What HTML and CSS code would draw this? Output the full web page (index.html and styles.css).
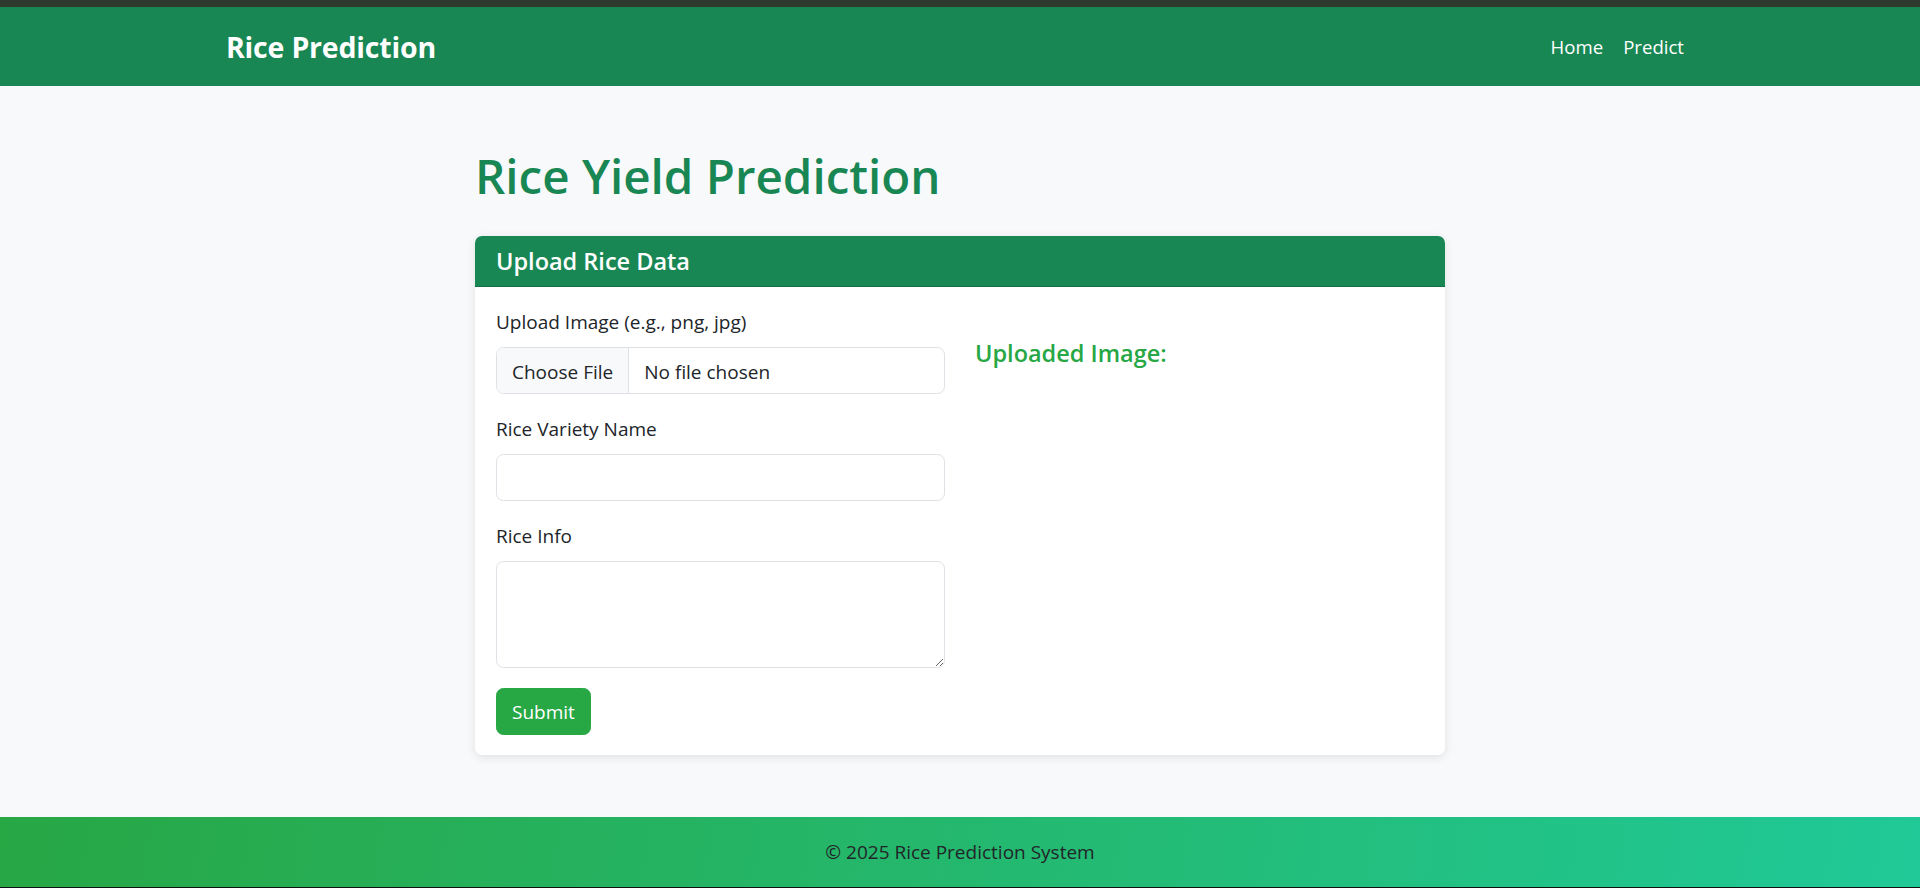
FILE: index.html
```html
<!DOCTYPE html>
<html lang="en">
<head>
<meta charset="utf-8">
<title>Rice Yield Prediction</title>
<link rel="stylesheet" href="styles.css">
</head>
<body>
<div class="topbar"></div>
<nav class="navbar">
  <div class="nav-inner">
    <a class="brand" href="#">Rice Prediction</a>
    <ul class="nav-links">
      <li><a class="nav-link" href="#">Home</a></li>
      <li><a class="nav-link" href="#">Predict</a></li>
    </ul>
  </div>
</nav>
<main class="main">
  <h1 class="page-title">Rice Yield Prediction</h1>
  <div class="card">
    <div class="card-header">
      <h5 class="card-title">Upload Rice Data</h5>
    </div>
    <div class="card-body">
      <div class="row">
        <form class="col">
          <div class="form-group">
            <label class="form-label" for="image">Upload Image (e.g., png, jpg)</label>
            <input class="form-control" type="file" id="image">
          </div>
          <div class="form-group">
            <label class="form-label" for="variety">Rice Variety Name</label>
            <input class="form-control" type="text" id="variety">
          </div>
          <div class="form-group">
            <label class="form-label" for="info">Rice Info</label>
            <textarea class="form-control textarea" id="info" rows="3"></textarea>
          </div>
          <button class="btn-submit" type="submit">Submit</button>
        </form>
        <div class="col">
          <h5 class="uploaded-title">Uploaded Image:</h5>
        </div>
      </div>
    </div>
  </div>
</main>
<footer class="footer">
  <p class="footer-text">© 2025 Rice Prediction System</p>
</footer>
</body>
</html>
```

FILE: styles.css
```css
* { box-sizing: border-box; }

html, body { margin: 0; padding: 0; }

body {
  min-height: 100vh;
  display: flex;
  flex-direction: column;
  background: #f8f9fa;
  color: #212529;
  font-family: "Open Sans", "Noto Sans", sans-serif;
  font-size: 19px;
  line-height: 30px;
}

.topbar {
  height: 7px;
  background: #2e3a2e;
}

.navbar {
  background: #198754;
  height: 79px;
  display: flex;
  align-items: center;
}

.nav-inner {
  width: 100%;
  max-width: 1468px;
  margin: 0 auto;
  display: flex;
  align-items: center;
  justify-content: space-between;
}

.brand {
  color: #fff;
  text-decoration: none;
  font-weight: 700;
  font-size: 28.5px;
  line-height: 36px;
  letter-spacing: -0.2px;
}

.nav-links {
  list-style: none;
  margin: 0;
  padding: 0;
  display: flex;
}

.nav-link {
  display: block;
  color: #fff;
  text-decoration: none;
  padding: 0 10px;
  font-size: 18.6px;
  line-height: 30px;
}

.main {
  width: 100%;
  max-width: 1000px;
  margin: 60px auto 0;
  padding: 0 15px;
}

.page-title {
  margin: 0 0 30px;
  color: #198754;
  font-size: 47.5px;
  line-height: 60px;
  font-weight: 600;
}

.card {
  background: #fff;
  border-radius: 7px;
  box-shadow: 0 2px 10px rgba(0, 0, 0, 0.1);
  overflow: hidden;
}

.card-header {
  background: #198754;
  padding: 10px 21px;
  border-bottom: 1px solid rgba(0, 0, 0, 0.175);
}

.card-title {
  margin: 0;
  color: #fff;
  font-size: 23.5px;
  line-height: 30px;
  font-weight: 600;
}

.card-body {
  padding: 20px 21px;
}

.row {
  display: grid;
  grid-template-columns: 1fr 1fr;
  column-gap: 30px;
}

.form-group {
  margin-bottom: 20px;
}

.form-label {
  display: block;
  margin-bottom: 10px;
}

.form-control {
  display: block;
  width: 100%;
  height: 47px;
  padding: 7.5px 15px;
  font-family: inherit;
  font-size: 19px;
  line-height: 30px;
  color: #212529;
  background: #fff;
  border: 1px solid #dee2e6;
  border-radius: 7.5px;
  outline: none;
}

.form-control[type="file"] {
  overflow: hidden;
}

.form-control::file-selector-button {
  padding: 7.5px 15px;
  margin: -7.5px 15px -7.5px -15px;
  height: 47px;
  font-family: inherit;
  font-size: 19px;
  color: #212529;
  background: #f8f9fa;
  border: 0 solid #dee2e6;
  border-right-width: 1px;
  border-radius: 0;
}

.textarea {
  height: 107px;
  resize: vertical;
}

.btn-submit {
  display: inline-block;
  height: 47px;
  padding: 7.5px 15px;
  font-family: inherit;
  font-size: 19px;
  line-height: 30px;
  color: #fff;
  background: #28a745;
  border: 1px solid #28a745;
  border-radius: 7.5px;
}

.uploaded-title {
  margin: 31px 0 0;
  color: #28a745;
  font-size: 23.5px;
  line-height: 30px;
  font-weight: 600;
}

.footer {
  margin-top: auto;
  padding: 20px 0;
  background: linear-gradient(100deg, #28a745, #20c997);
  border-bottom: 1px solid #111;
  text-align: center;
}

.footer-text {
  margin: 0;
  color: #212529;
  line-height: 30px;
}
```
